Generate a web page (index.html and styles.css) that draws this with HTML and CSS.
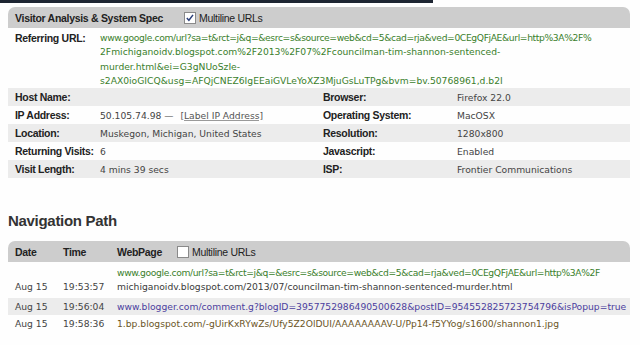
FILE: index.html
```html
<!DOCTYPE html>
<html>
<head>
<meta charset="utf-8">
<link rel="stylesheet" href="styles.css">
</head>
<body>
<div class="topbar"></div>
<section class="panel info">
  <div class="head">
    <span class="title">Visitor Analysis &amp; System Spec</span>
    <span class="opt"><span class="box checked"><svg viewBox="0 0 11 11" width="10" height="10"><path d="M2 5.5 L4.3 8 L8.8 2" fill="none" stroke="#2b3f7a" stroke-width="1.6"/></svg></span>Multiline URLs</span>
  </div>
  <div class="grid">
    <div class="row ref">
      <div class="lbl">Referring URL:</div>
      <div class="val url green wide">
        <span class="ln tight">www.google.com/url?sa=t&amp;rct=j&amp;q=&amp;esrc=s&amp;source=web&amp;cd=5&amp;cad=rja&amp;ved=0CEgQFjAE&amp;url=http%3A%2F%</span>
        <span class="ln">2Fmichiganoidv.blogspot.com%2F2013%2F07%2Fcouncilman-tim-shannon-sentenced-</span>
        <span class="ln">murder.html&amp;ei=G3gNUoSzIe-</span>
        <span class="ln">s2AX0ioGICQ&amp;usg=AFQjCNEZ6IgEEaiGVLeYoXZ3MjuGsLuTPg&amp;bvm=bv.50768961,d.b2I</span>
      </div>
    </div>
    <div class="row alt">
      <div class="lbl">Host Name:</div><div class="val"></div>
      <div class="lbl">Browser:</div><div class="val">Firefox 22.0</div>
    </div>
    <div class="row">
      <div class="lbl">IP Address:</div><div class="val">50.105.74.98 — <span class="ulink">[Label IP Address]</span></div>
      <div class="lbl">Operating System:</div><div class="val">MacOSX</div>
    </div>
    <div class="row alt">
      <div class="lbl">Location:</div><div class="val">Muskegon, Michigan, United States</div>
      <div class="lbl">Resolution:</div><div class="val">1280x800</div>
    </div>
    <div class="row">
      <div class="lbl">Returning Visits:</div><div class="val">6</div>
      <div class="lbl">Javascript:</div><div class="val">Enabled</div>
    </div>
    <div class="row alt">
      <div class="lbl">Visit Length:</div><div class="val">4 mins 39 secs</div>
      <div class="lbl">ISP:</div><div class="val">Frontier Communications</div>
    </div>
  </div>
</section>

<h2 class="navtitle">Navigation Path</h2>

<section class="panel nav">
  <div class="nhead">
    <div class="hc">Date</div>
    <div class="hc">Time</div>
    <div class="hc">WebPage <span class="opt"><span class="box"></span>Multiline URLs</span></div>
  </div>
  <div class="nrow two">
    <div class="nc">Aug 15</div>
    <div class="nc">19:53:57</div>
    <div class="nc page"><span class="ln green tight">www.google.com/url?sa=t&amp;rct=j&amp;q=&amp;esrc=s&amp;source=web&amp;cd=5&amp;cad=rja&amp;ved=0CEgQFjAE&amp;url=http%3A%2F</span><span class="ln dark">michiganoidv.blogspot.com/2013/07/councilman-tim-shannon-sentenced-murder.html</span></div>
  </div>
  <div class="nrow alt">
    <div class="nc">Aug 15</div>
    <div class="nc">19:56:04</div>
    <div class="nc page"><span class="ln purple">www.blogger.com/comment.g?blogID=3957752986490500628&amp;postID=954552825723754796&amp;isPopup=true</span></div>
  </div>
  <div class="nrow">
    <div class="nc">Aug 15</div>
    <div class="nc">19:58:36</div>
    <div class="nc page"><span class="ln brown">1.bp.blogspot.com/-gUirKxRYwZs/Ufy5Z2OlDUI/AAAAAAAAV-U/Pp14-f5YYog/s1600/shannon1.jpg</span></div>
  </div>
</section>
</body>
</html>
```

FILE: styles.css
```css
html, body {
  margin: 0;
  padding: 0;
  background: #fefefe;
}
body {
  font-family: "DejaVu Sans", Verdana, sans-serif;
  color: #444;
}
.topbar {
  width: 433px;
  height: 3px;
  background: #1d2532;
}
.panel {
  width: 622px;
  margin-left: 8px;
}
.info {
  margin-top: 4px;
}
.head {
  height: 21px;
  background: #cdcdcd;
  border-radius: 7px 7px 0 0;
  display: flex;
  align-items: center;
  padding-left: 7px;
  font-family: "Liberation Sans", Arial, sans-serif;
  font-weight: bold;
  font-size: 10.5px;
  letter-spacing: -0.3px;
  color: #222;
}
.title {
  margin-right: 21px;
}
.opt {
  display: inline-flex;
  align-items: center;
  font-family: "Liberation Sans", Arial, sans-serif;
  font-weight: normal;
  font-size: 10.5px;
  letter-spacing: -0.3px;
  color: #222;
}
.box {
  width: 10px;
  height: 10px;
  border: 1px solid #8a8a8a;
  background: #fff;
  margin-right: 3px;
  display: inline-flex;
  align-items: center;
  justify-content: center;
  box-sizing: content-box;
}
.box svg {
  display: block;
}
.grid {
  display: grid;
  grid-template-columns: 85px 223px 134px 180px;
}
.row {
  display: contents;
}
.row > div {
  height: 18px;
  display: flex;
  align-items: center;
  padding-left: 7px;
  box-sizing: border-box;
  white-space: pre;
}
.row.alt > div {
  background: #ececec;
}
.lbl {
  font-family: "Liberation Sans", Arial, sans-serif;
  font-weight: bold;
  font-size: 10.5px;
  letter-spacing: -0.3px;
  color: #222;
}
.val {
  font-size: 9.2px;
  color: #444;
}
.row.ref > div {
  height: 60px;
  align-items: flex-start;
  padding-top: 3px;
  white-space: nowrap;
}
.row.ref > .lbl {
  padding-top: 4px;
}
.row.ref > .wide {
  grid-column: span 3;
  flex-direction: column;
}
.ln {
  display: block;
  white-space: nowrap;
  line-height: 14.3px;
}
.ln.tight {
  letter-spacing: -0.38px;
}
.green { color: #3b7f2c; }
.purple { color: #4b3e9e; }
.brown { color: #6b5526; }
.dark { color: #3a3a3a; }
.ulink {
  margin-left: 4px;
  text-decoration: underline;
  text-decoration-color: #9a9a9a;
  color: #555;
}

.navtitle {
  margin: 34px 0 0 8px;
  height: 29px;
  font-family: "Liberation Sans", Arial, sans-serif;
  font-size: 15px;
  letter-spacing: -0.3px;
  font-weight: bold;
  color: #333;
  line-height: 18px;
}
.nhead, .nrow {
  display: grid;
  grid-template-columns: 48px 54px 520px;
}
.nhead {
  height: 21px;
  background: #cdcdcd;
  border-radius: 7px 7px 0 0;
  align-items: center;
}
.hc {
  padding-left: 7px;
  font-family: "Liberation Sans", Arial, sans-serif;
  font-weight: bold;
  font-size: 10.5px;
  letter-spacing: -0.3px;
  color: #222;
  display: flex;
  align-items: center;
  white-space: nowrap;
}
.hc .opt {
  margin-left: 15px;
}
.nrow {
  min-height: 17px;
  align-items: end;
}
.nrow.two {
  padding: 4px 0 3px;
}
.nrow.alt {
  background: #ececec;
}
.nc {
  padding-left: 7px;
  font-size: 9.2px;
  color: #444;
  line-height: 14.3px;
  white-space: nowrap;
  padding-top: 2px;
  padding-bottom: 1px;
}
.nrow.two .nc {
  padding-top: 0;
  padding-bottom: 0;
}
.page {
  display: flex;
  flex-direction: column;
}
```
